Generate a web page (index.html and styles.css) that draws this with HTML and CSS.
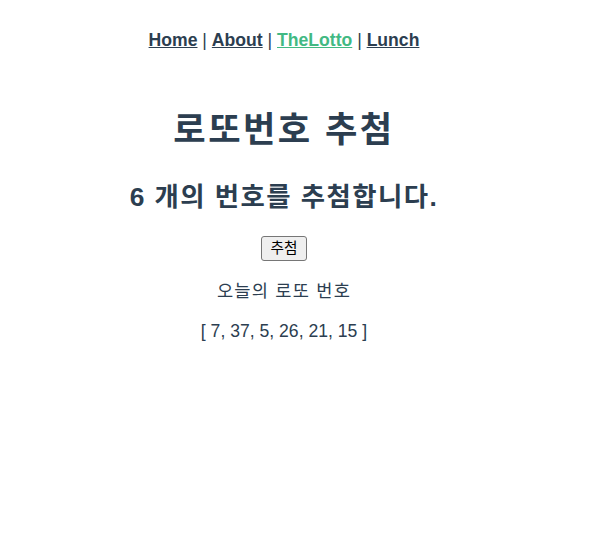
FILE: index.html
```html
<!DOCTYPE html>
<html lang="ko">
<head>
<meta charset="utf-8">
<title>Lotto</title>
<link rel="stylesheet" href="styles.css">
</head>
<body>
<div class="app">
  <div class="nav">
    <a href="#">Home</a> | <a href="#">About</a> | <a href="#" class="active">TheLotto</a> | <a href="#">Lunch</a>
  </div>
  <div class="lotto">
    <h1 class="title">로또번호 추첨</h1>
    <h2 class="subtitle">6 개의 번호를 추첨합니다.</h2>
    <button class="btn" type="button">추첨</button>
    <p class="label">오늘의 로또 번호</p>
    <p class="numbers">[ 7, 37, 5, 26, 21, 15 ]</p>
  </div>
</div>
</body>
</html>
```
FILE: styles.css
```css
html, body {
  margin: 0;
  padding: 0;
  background: #fff;
}
.app {
  width: 568px;
  font-family: "Liberation Sans", Arial, "Noto Sans CJK KR", sans-serif;
  text-align: center;
  color: #2c3e50;
}
.nav {
  padding: 30px;
  font-size: 17.6px;
  line-height: 20px;
}
.nav a {
  font-weight: bold;
  color: #2c3e50;
}
.nav a.active {
  color: #42b983;
}
.lotto {
  display: flex;
  flex-direction: column;
  align-items: center;
}
.title {
  font-size: 35.2px;
  line-height: 40px;
  letter-spacing: 0.07em;
  margin: 30px 0 32px;
}
.subtitle {
  font-size: 26.4px;
  line-height: 30px;
  letter-spacing: 0.055em;
  margin: 0 0 24px;
}
.btn {
  box-sizing: border-box;
  width: 46px;
  height: 25px;
  font-family: "Liberation Sans", Arial, "Noto Sans CJK KR", sans-serif;
  font-size: 14.67px;
  line-height: 17px;
  padding: 0;
  color: #000;
  background: #efefef;
  border: 1px solid #767676;
  border-radius: 3px;
}
.label, .numbers {
  font-size: 17.6px;
  line-height: 20px;
  margin: 20px 0 0;
}
.label {
  letter-spacing: 0.07em;
}
```
